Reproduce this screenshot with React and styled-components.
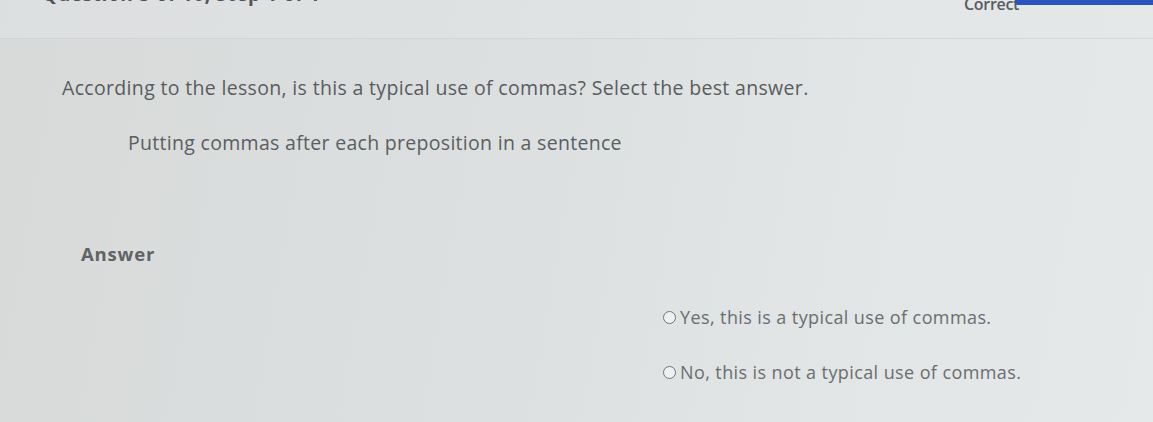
import React from 'react';
import styled, { createGlobalStyle } from 'styled-components';

const GlobalStyle = createGlobalStyle`
  html, body {
    margin: 0;
    padding: 0;
  }
  body {
    width: 1153px;
    height: 422px;
    overflow: hidden;
    font-family: "Open Sans", "Liberation Sans", sans-serif;
    color: #5d6163;
    background: linear-gradient(100deg, #d8dada 0%, #dcdfdf 40%, #e2e6e6 75%, #e6e9e9 100%);
  }
`;

const Page = styled.div`
  display: flex;
  flex-direction: column;
  height: 422px;
`;

const TopBar = styled.header`
  display: flex;
  align-items: flex-start;
  justify-content: space-between;
  height: 38px;
  border-bottom: 1px solid rgba(200, 206, 208, 0.6);
  background: rgba(228, 232, 234, 0.35);
`;

const StepLabel = styled.div`
  margin-top: -17px;
  padding-left: 42px;
  font-size: 19px;
  font-weight: 700;
  letter-spacing: 0.6px;
  color: #4f5355;
  line-height: 22px;
`;

const Status = styled.div`
  display: flex;
  align-items: flex-start;
`;

const StatusText = styled.span`
  margin-top: -6px;
  width: 51px;
  font-size: 16px;
  font-weight: 600;
  letter-spacing: -0.3px;
  line-height: 20px;
  color: #575b5e;
`;

const ProgressBar = styled.div`
  width: 138px;
  height: 5px;
  background: #2b53bd;
  border-radius: 0 0 0 3px;
`;

const Body = styled.main`
  display: flex;
  flex-direction: column;
  padding: 37px 0 0 62px;
`;

const Prompt = styled.p`
  margin: 0;
  font-size: 19.5px;
  line-height: 24px;
  letter-spacing: 0.33px;
  color: #585c5e;
`;

const Statement = styled.p`
  margin: 31px 0 0 66px;
  font-size: 19.5px;
  line-height: 24px;
  letter-spacing: 0.3px;
  color: #5a5e60;
`;

const AnswerHeading = styled.h2`
  margin: 87px 0 0 19px;
  font-size: 18.5px;
  font-weight: 700;
  line-height: 24px;
  letter-spacing: 0.8px;
  color: #5f6365;
`;

const Options = styled.div`
  display: flex;
  flex-direction: column;
  gap: 31px;
  margin: 39px 0 0 601px;
`;

const Option = styled.label`
  display: flex;
  align-items: center;
  gap: 4px;
  font-size: 18px;
  line-height: 24px;
  letter-spacing: 0.4px;
  color: #6a6e70;
`;

const Radio = styled.span`
  width: 11px;
  height: 11px;
  border: 1.5px solid #707476;
  border-radius: 50%;
  background: #eef1f1;
  flex-shrink: 0;
`;

const options = [
  'Yes, this is a typical use of commas.',
  'No, this is not a typical use of commas.',
];

export default function App() {
  return (
    <Page>
      <GlobalStyle />
      <TopBar>
        <StepLabel>Question 5 of 10, Step 1 of 1</StepLabel>
        <Status>
          <StatusText>Correct</StatusText>
          <ProgressBar />
        </Status>
      </TopBar>
      <Body>
        <Prompt>
          According to the lesson, is this a typical use of commas? Select the best answer.
        </Prompt>
        <Statement>Putting commas after each preposition in a sentence</Statement>
        <AnswerHeading>Answer</AnswerHeading>
        <Options>
          {options.map((text) => (
            <Option key={text}>
              <Radio />
              {text}
            </Option>
          ))}
        </Options>
      </Body>
    </Page>
  );
}
